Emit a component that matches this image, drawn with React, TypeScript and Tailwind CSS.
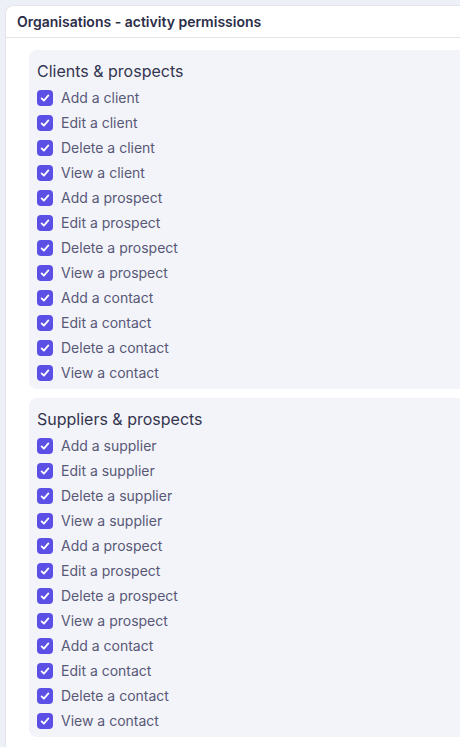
const sections = [
  {
    title: 'Clients & prospects',
    items: [
      'Add a client',
      'Edit a client',
      'Delete a client',
      'View a client',
      'Add a prospect',
      'Edit a prospect',
      'Delete a prospect',
      'View a prospect',
      'Add a contact',
      'Edit a contact',
      'Delete a contact',
      'View a contact',
    ],
  },
  {
    title: 'Suppliers & prospects',
    items: [
      'Add a supplier',
      'Edit a supplier',
      'Delete a supplier',
      'View a supplier',
      'Add a prospect',
      'Edit a prospect',
      'Delete a prospect',
      'View a prospect',
      'Add a contact',
      'Edit a contact',
      'Delete a contact',
      'View a contact',
    ],
  },
];

function Check() {
  return (
    <span className="flex h-4 w-4 shrink-0 items-center justify-center rounded-[4px] bg-[#5b4fe6]">
      <svg viewBox="0 0 16 16" className="h-3 w-3" fill="none">
        <path d="M3.5 8.5l3 3 6-7" stroke="white" strokeWidth="2.4" strokeLinecap="round" strokeLinejoin="round" />
      </svg>
    </span>
  );
}

export default function App() {
  return (
    <div className="h-[747px] overflow-hidden bg-[#eef0f8] pl-[5px] pt-[5px] font-['Inter',sans-serif]">
      <div className="min-h-[760px] rounded-tl-lg border-l border-t border-[#e3e4ec] bg-white">
        <div className="flex h-[32px] items-center border-b border-[#e3e3e8] pl-[11px] text-[14px] font-semibold text-[#2c2d48]">
          Organisations - activity permissions
        </div>
        <div className="flex flex-col gap-[9px] pl-[23px] pt-[12px]">
          {sections.map((s) => (
            <section key={s.title} className="rounded-l-lg bg-[#f3f4f9] pb-[4px] pl-[8px] pt-[8px]">
              <h2 className="h-[27px] text-[16px] leading-[27px] text-[#34354f]">{s.title}</h2>
              <ul>
                {s.items.map((it) => (
                  <li key={it} className="flex h-[25px] items-center gap-[8px] text-[14px] text-[#585877]">
                    <Check />
                    {it}
                  </li>
                ))}
              </ul>
            </section>
          ))}
        </div>
      </div>
    </div>
  );
}
